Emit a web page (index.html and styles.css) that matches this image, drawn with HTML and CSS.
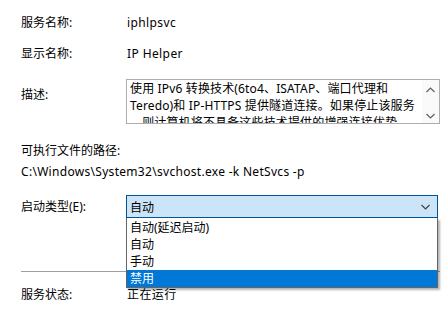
FILE: index.html
```html
<!DOCTYPE html>
<html lang="zh-CN">
<head>
    <meta charset="UTF-8">
    <title>IP Helper 属性</title>
    <link rel="stylesheet" href="styles.css">
</head>
<body>
    <div class="dialog">
        <div class="row">
            <span class="label">服务名称:</span>
            <span class="value">iphlpsvc</span>
        </div>
        <div class="row">
            <span class="label">显示名称:</span>
            <span class="value">IP Helper</span>
        </div>
        <div class="desc-row">
            <span class="label desc-label">描述:</span>
            <div class="desc-box">
                <div class="desc-text">
                    <div class="desc-line">使用 IPv6 转换技术(6to4、ISATAP、端口代理和</div>
                    <div class="desc-line">Teredo)和 IP-HTTPS 提供隧道连接。如果停止该服务</div>
                    <div class="desc-line">，则计算机将不具备这些技术提供的增强连接优势。</div>
                </div>
                <div class="scrollbar">
                    <svg width="9" height="6" viewBox="0 0 9 6"><polyline points="0.5,5 4.5,1 8.5,5" fill="none" stroke="#606060" stroke-width="1.2"/></svg>
                    <svg width="9" height="6" viewBox="0 0 9 6"><polyline points="0.5,1 4.5,5 8.5,1" fill="none" stroke="#606060" stroke-width="1.2"/></svg>
                </div>
            </div>
        </div>
        <div class="path-label">可执行文件的路径:</div>
        <div class="path">C:\Windows\System32\svchost.exe -k NetSvcs -p</div>
        <div class="startup-row">
            <span class="label">启动类型(E):</span>
            <div class="combo">
                <div class="combo-box">
                    <span>自动</span>
                    <svg width="9" height="6" viewBox="0 0 9 6"><polyline points="0.5,1 4.5,5 8.5,1" fill="none" stroke="#404040" stroke-width="1.1"/></svg>
                </div>
                <ul class="combo-list">
                    <li>自动(延迟启动)</li>
                    <li>自动</li>
                    <li>手动</li>
                    <li class="selected">禁用</li>
                </ul>
            </div>
        </div>
        <div class="separator"></div>
        <div class="status-row">
            <span class="label">服务状态:</span>
            <span class="value">正在运行</span>
        </div>
    </div>
</body>
</html>
```

FILE: styles.css
```css
body {
    margin: 0;
    background: #ffffff;
    font-family: "Noto Sans", "Noto Sans CJK SC", sans-serif;
    font-size: 12px;
    color: #000000;
}
.dialog {
    padding: 7px 6px 0 21px;
}
.row {
    display: flex;
    align-items: center;
    height: 31px;
}
.label {
    width: 105px;
    flex-shrink: 0;
    line-height: 17px;
}
.value {
    padding-left: 1px;
    line-height: 17px;
    letter-spacing: 0.4px;
}
.desc-row {
    display: flex;
    margin-top: 10px;
}
.desc-label {
    padding-top: 7px;
}
.desc-box {
    display: flex;
    width: 315px;
    height: 45px;
    box-sizing: border-box;
    border: 1px solid #abadb3;
    overflow: hidden;
}
.desc-text {
    flex: 1;
    padding: 0 3px;
    line-height: 17px;
    letter-spacing: 0.15px;
}
.desc-line {
    white-space: nowrap;
}
.scrollbar {
    width: 17px;
    display: flex;
    flex-direction: column;
    justify-content: space-between;
    align-items: center;
    padding: 7px 0 4px;
    background: #fafafa;
}
.path-label {
    margin-top: 18px;
    line-height: 17px;
}
.path {
    margin-top: 4px;
    line-height: 17px;
    letter-spacing: 0.3px;
}
.startup-row {
    display: flex;
    align-items: center;
    margin-top: 15px;
}
.combo {
    position: relative;
}
.combo-box {
    display: flex;
    align-items: center;
    justify-content: space-between;
    width: 312px;
    height: 23px;
    box-sizing: border-box;
    padding: 0 7px 0 3px;
    border: 1px solid #005499;
    background: #cce4f7;
}
.combo-list {
    position: absolute;
    top: 100%;
    left: 0;
    width: 312px;
    box-sizing: border-box;
    margin: 0;
    padding: 1px 0 0;
    list-style: none;
    background: #ffffff;
    border: 1px solid #646464;
    border-top: none;
    box-shadow: 2px 2px 2px rgba(0, 0, 0, 0.3);
    z-index: 2;
}
.combo-list li {
    height: 17px;
    line-height: 17px;
    padding-left: 3px;
}
.combo-list li.selected {
    background: #0078d7;
    color: #ffffff;
}
.separator {
    margin-top: 53px;
    height: 1px;
    background: #a0a0a0;
}
.status-row {
    display: flex;
    margin-top: 14px;
}
```
